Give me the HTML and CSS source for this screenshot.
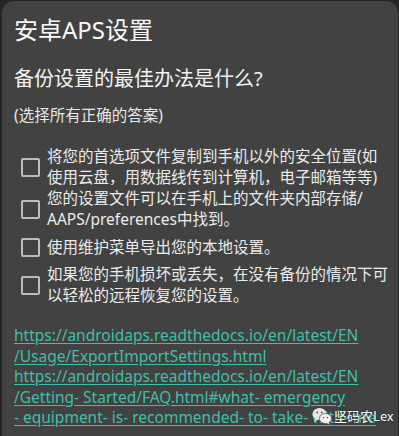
FILE: index.html
```html
<!DOCTYPE html>
<html lang="zh-CN">
<head>
<meta charset="utf-8">
<title>安卓APS设置</title>
<link rel="stylesheet" href="styles.css">
</head>
<body>
<div class="panel">
  <h1 class="title">安卓APS设置</h1>
  <h2 class="question">备份设置的最佳办法是什么?</h2>
  <p class="hint">(选择所有正确的答案)</p>
  <ul class="options">
    <li class="option"><span class="box"></span><span class="label">将您的首选项文件复制到手机以外的安全位置(如<br>使用云盘，用数据线传到计算机，电子邮箱等等)</span></li>
    <li class="option"><span class="box"></span><span class="label">您的设置文件可以在手机上的文件夹内部存储/<br>AAPS/preferences中找到。</span></li>
    <li class="option single"><span class="box"></span><span class="label">使用维护菜单导出您的本地设置。</span></li>
    <li class="option"><span class="box"></span><span class="label">如果您的手机损坏或丢失，在没有备份的情况下可<br>以轻松的远程恢复您的设置。</span></li>
  </ul>
  <div class="links">
    <a class="link" href="#">https://androidaps.readthedocs.io/en/latest/EN<br>/Usage/ExportImportSettings.html</a>
    <a class="link" href="#">https://androidaps.readthedocs.io/en/latest/EN<br>/Getting<span class="hy">-</span>Started/FAQ.html#what<span class="hy">-</span>emergency<br><span class="hy">-</span>equipment<span class="hy">-</span>is<span class="hy">-</span>recommended<span class="hy">-</span>to<span class="hy">-</span>take<span class="hy">-</span>with<span class="hy">-</span>me</a>
  </div>
  <div class="watermark">
    <svg class="wx" width="20" height="18" viewBox="0 0 20 18">
      <ellipse cx="7.5" cy="7" rx="7" ry="6" fill="#e6e6e6"/>
      <path d="M3 11.5 L2.2 14.5 L6 12.5 Z" fill="#e6e6e6"/>
      <ellipse cx="13.5" cy="11.5" rx="6" ry="5" fill="#f4f4f4" stroke="#5a5a5a" stroke-width="0.8"/>
      <path d="M16.5 15 L17.6 17.4 L14.5 16 Z" fill="#f4f4f4"/>
      <circle cx="5.2" cy="5.5" r="0.9" fill="#555"/>
      <circle cx="9.6" cy="5.5" r="0.9" fill="#555"/>
      <circle cx="11.6" cy="10.6" r="0.8" fill="#555"/>
      <circle cx="15.4" cy="10.6" r="0.8" fill="#555"/>
    </svg>
    <span class="wm-text">坚码农Lex</span>
  </div>
</div>
</body>
</html>
```

FILE: styles.css
```css
html, body {
  margin: 0;
  padding: 0;
  background: #262626;
  overflow: hidden;
}

body {
  font-family: "Noto Sans", "Noto Sans CJK SC", sans-serif;
  color: #ececec;
}

.panel {
  position: relative;
  margin: 1px 1px 0 2px;
  height: 440px;
  background: #424242;
  border-radius: 12px 12px 0 0;
  padding: 13px 14px 0 12px;
  box-sizing: border-box;
  overflow: hidden;
}

.title {
  margin: 0;
  font-size: 24px;
  line-height: 32px;
  font-weight: 400;
  color: #fafafa;
  white-space: nowrap;
}

.question {
  margin: 19px 0 0;
  font-size: 20px;
  line-height: 28px;
  font-weight: 400;
  color: #f4f4f4;
  white-space: nowrap;
}

.hint {
  margin: 11px 0 0;
  font-size: 15.5px;
  line-height: 22px;
  color: #e8e8e8;
  white-space: nowrap;
}

.options {
  list-style: none;
  margin: 20px 0 0;
  padding: 0;
}

.option {
  display: flex;
  align-items: center;
  min-height: 34px;
}

.box {
  flex: none;
  width: 15px;
  height: 15px;
  border: 2px solid #bdbdbd;
  border-radius: 2px;
  margin-left: 7px;
  margin-right: 7px;
}

.label {
  font-size: 15.5px;
  line-height: 21px;
  color: #ececec;
  white-space: nowrap;
}

.links {
  margin-top: 19px;
  display: flex;
  flex-direction: column;
}

.link {
  display: block;
  font-size: 15.5px;
  line-height: 20.5px;
  color: #3fbfa9;
  text-decoration: underline;
  text-underline-offset: 2px;
  white-space: nowrap;
}

.hy {
  letter-spacing: 4px;
}

.watermark {
  position: absolute;
  left: 310px;
  top: 406px;
  display: flex;
  align-items: center;
  gap: 2px;
}

.wm-text {
  font-family: "Noto Sans CJK SC", sans-serif;
  font-size: 13px;
  line-height: 18px;
  color: #ffffff;
  text-shadow: 0 0 2px rgba(0,0,0,0.6);
}
```
